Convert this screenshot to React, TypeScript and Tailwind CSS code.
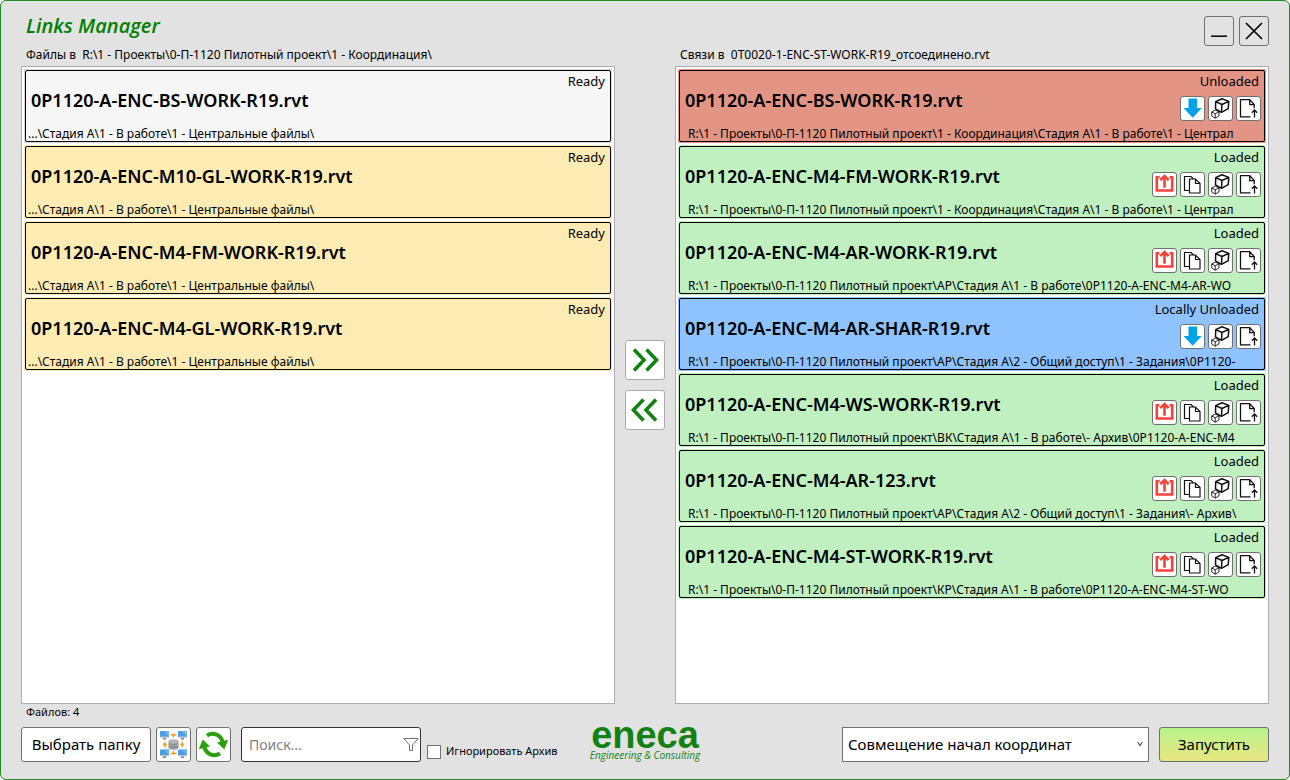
import React, { useState } from "react";
import clsx from "clsx";

type LinkStatus = "Loaded" | "Unloaded" | "Locally Unloaded";

const files = [
  "0P1120-A-ENC-BS-WORK-R19.rvt",
  "0P1120-A-ENC-M10-GL-WORK-R19.rvt",
  "0P1120-A-ENC-M4-FM-WORK-R19.rvt",
  "0P1120-A-ENC-M4-GL-WORK-R19.rvt",
];

const filePath = "...\\Стадия А\\1 - В работе\\1 - Центральные файлы\\";
const root = "R:\\1 - Проекты\\0-П-1120 Пилотный проект\\";

const links: { name: string; status: LinkStatus; path: string }[] = [
  {
    name: "0P1120-A-ENC-BS-WORK-R19.rvt",
    status: "Unloaded",
    path: root + "1 - Координация\\Стадия А\\1 - В работе\\1 - Централ",
  },
  {
    name: "0P1120-A-ENC-M4-FM-WORK-R19.rvt",
    status: "Loaded",
    path: root + "1 - Координация\\Стадия А\\1 - В работе\\1 - Централ",
  },
  {
    name: "0P1120-A-ENC-M4-AR-WORK-R19.rvt",
    status: "Loaded",
    path: root + "АР\\Стадия А\\1 - В работе\\0P1120-A-ENC-M4-AR-WO",
  },
  {
    name: "0P1120-A-ENC-M4-AR-SHAR-R19.rvt",
    status: "Locally Unloaded",
    path: root + "АР\\Стадия А\\2 - Общий доступ\\1 - Задания\\0P1120-",
  },
  {
    name: "0P1120-A-ENC-M4-WS-WORK-R19.rvt",
    status: "Loaded",
    path: root + "ВК\\Стадия А\\1 - В работе\\- Архив\\0P1120-A-ENC-M4",
  },
  {
    name: "0P1120-A-ENC-M4-AR-123.rvt",
    status: "Loaded",
    path: root + "АР\\Стадия А\\2 - Общий доступ\\1 - Задания\\- Архив\\",
  },
  {
    name: "0P1120-A-ENC-M4-ST-WORK-R19.rvt",
    status: "Loaded",
    path: root + "КР\\Стадия А\\1 - В работе\\0P1120-A-ENC-M4-ST-WO",
  },
];

const statusColor: Record<LinkStatus, string> = {
  Loaded: "bg-[#c0f0c0]",
  Unloaded: "bg-[#e29584]",
  "Locally Unloaded": "bg-[#8ec3ff]",
};

/* Icons */
const DownArrowIcon = () => (
  <svg viewBox="0 0 25 25" className="h-[25px] w-[25px] shrink-0">
    <path d="M8.500 2.500h8.500v9.500h4.800L12.700 21.800 3.500 12h5z" fill="#00a2e8" />
  </svg>
);

const UnloadIcon = () => (
  <svg viewBox="0 0 25 25" className="h-[25px] w-[25px] shrink-0" fill="none" stroke="#f44336" strokeWidth="2.6">
    <path d="M7.500 5.300H4.800v13.200h15.400V5.300H17.500" />
    <path d="M12.500 15.800V4.500M8.300 8.200l4.200-4.200 4.200 4.200" />
  </svg>
);

const CopyIcon = () => (
  <svg viewBox="0 0 25 25" className="h-[25px] w-[25px] shrink-0" fill="none" stroke="#111" strokeWidth="1.2">
    <path d="M9.500 18.500h-5v-14h6.500l2.500 2.500" />
    <path d="M9.500 7H15.500l4.500 4.500v9.500h-10.500zM15.500 7v4.500h4.500" />
  </svg>
);

const CubesIcon = () => (
  <svg viewBox="0 0 25 25" className="h-[25px] w-[25px] shrink-0" fill="none" stroke="#111" strokeLinejoin="round">
    <path d="M14 2.800l6.800 2.600-.6 7.200-6.700 3.700-6-3.500.2-7.200zM7.700 5.600l6.200 2.900 6.900-3.100M13.900 8.500l-.4 7.800" strokeWidth="1.5" />
    <path d="M7.300 14.200l3.900 1.700-.3 4-3.700 2.300-3.500-2.300V16zM3.700 16l3.500 1.700 4-1.800M7.200 17.700v4.500" strokeWidth="0.9" />
  </svg>
);

const PageUpIcon = () => (
  <svg viewBox="0 0 25 25" className="h-[25px] w-[25px] shrink-0" fill="none" stroke="#111" strokeWidth="1.3">
    <path d="M14.500 20.800h-10V3.600h9.200l4.500 5v3.600M13.700 3.600v5h4.500" />
    <path d="M18.500 21.500v-7.500M15.800 16.800l2.700-2.800 2.700 2.800" />
  </svg>
);

const Monitor = ({ x, y }: { x: number; y: number }) => (
  <g transform={`translate(${x} ${y})`}>
    <rect width="9" height="6" rx="0.5" fill="#4a9fe3" />
    <path d="M4 0h5v6z" fill="#6bb8f0" />
    <path d="M0 5.500h9v1.200H0z" fill="#b9c3cc" />
    <path d="M3.500 6.700h2l1 1.800h-4z" fill="#7d858c" />
  </g>
);

const NetworkIcon = () => (
  <svg viewBox="0 0 33 33" className="h-[33px] w-[33px]">
    <Monitor x={3} y={3} />
    <Monitor x={21} y={3} />
    <Monitor x={3} y={21.5} />
    <Monitor x={21} y={21.5} />
    <g stroke="#fb9a1c" strokeWidth="1.2" fill="#fb9a1c">
      <path d="M13.500 6.800h6M16.500 7v2.500M13.500 25.500h6M16.500 25.500V23" />
      <path d="M8 13.500v6M8 16.500h2M25 13.500v6M25 16.500h-2" />
      <circle cx="16.500" cy="6.800" r="0.800" />
      <circle cx="16.500" cy="25.500" r="0.800" />
      <circle cx="7.500" cy="16.500" r="0.800" />
      <circle cx="25.500" cy="16.500" r="0.800" />
    </g>
    <path d="M11.500 13.500v6c0 3 10 3 10 0v-6z" fill="#8d8d8d" />
    <ellipse cx="16.500" cy="13.500" rx="5" ry="2.200" fill="#b4b4b4" />
    <path d="M11.500 16.300c1 2 9 2 10 0M11.500 19c1 2 9 2 10 0" stroke="#b8b8b8" fill="none" strokeWidth="0.700" />
  </svg>
);

const RefreshIcon = () => (
  <svg viewBox="0 0 33 33" className="h-[33px] w-[33px]" fill="none">
    <path d="M10 7.500c6-3.500 13-1.500 15.500 6" stroke="#2c9f0c" strokeWidth="4" />
    <path d="M20 14.500l11.200-2.700-3.900 9.700z" fill="#2c9f0c" />
    <path d="M23 25.500c-6 3.500-13 1.500-15.500-6" stroke="#2c9f0c" strokeWidth="4" />
    <path d="M13 18.500L1.800 21.200l3.900-9.700z" fill="#2c9f0c" />
  </svg>
);

const IconButton: React.FC<{ label: string; children: React.ReactNode }> = ({ label, children }) => (
  <button
    aria-label={label}
    className="flex h-[25px] w-[25px] items-center justify-center overflow-hidden rounded-[3px] border border-[#707070] bg-white hover:bg-gray-100"
  >
    {children}
  </button>
);

const MoveButton: React.FC<{ label: string; d: string }> = ({ label, d }) => (
  <button aria-label={label} className="h-10 w-10 rounded-[3px] border border-[#ababab] bg-white">
    <svg viewBox="0 0 38 38" fill="none" stroke="#138213" strokeWidth="3.6">
      <path d={d} />
    </svg>
  </button>
);

interface CardProps {
  name: string;
  status: string;
  path: string;
  color: string;
  pathClass: string;
  onClick?: () => void;
  children?: React.ReactNode;
}

const Card: React.FC<CardProps> = ({ name, status, path, color, pathClass, onClick, children }) => (
  <li onClick={onClick} className={clsx("mb-0.5 p-px", color)}>
    <div className="rounded-xs border border-black">
      <div className="flex h-[54px] justify-between">
        <h2 className="pt-[15px] pl-[5px] text-lg leading-7 font-semibold whitespace-nowrap">{name}</h2>
        <div className="flex flex-col items-end gap-[5px] pr-[3px]">
          <span className="pr-0.5 text-[13px] leading-5">{status}</span>
          <div className="flex gap-[3px]">{children}</div>
        </div>
      </div>
      <p className={clsx("h-4 text-xs leading-[18px] whitespace-nowrap", pathClass)}>{path}</p>
    </div>
  </li>
);

const App: React.FC = () => {
  const [selected, setSelected] = useState(0);
  const [query, setQuery] = useState("");

  const shown = files.filter((f) => f.toLowerCase().includes(query.toLowerCase()));

  return (
    <div className="flex min-h-screen flex-col rounded-md border border-[#228b22] bg-[#e2e2e2] px-5 pt-[15px] pb-[17px] font-['Noto_Sans',sans-serif] text-black">
      {/* Header */}
      <header className="flex h-[31px] items-start justify-between pl-[5px]">
        <h1 className="font-['Open_Sans',sans-serif] text-xl leading-5 font-semibold text-[#008000] italic">Links Manager</h1>
        <div className="flex gap-[5px]">
          <button aria-label="Свернуть" className="h-[30px] w-[30px] rounded-[3px] border border-[#707070]">
            <svg viewBox="0 0 28 28" stroke="#000" strokeWidth="1.5">
              <path d="M6 19.200h16" />
            </svg>
          </button>
          <button aria-label="Закрыть" className="h-[30px] w-[30px] rounded-[3px] border border-[#707070]">
            <svg viewBox="0 0 28 28" stroke="#000" strokeWidth="1.7">
              <path d="M6 6l16 16M22 6L6 22" />
            </svg>
          </button>
        </div>
      </header>

      <main className="grid flex-1 grid-cols-[minmax(0,1fr)_60px_minmax(0,1fr)] grid-rows-[auto_1fr_auto]">
        <p className="mb-[3px] pl-[5px] text-xs leading-4 whitespace-pre">
          {"Файлы в  R:\\1 - Проекты\\0-П-1120 Пилотный проект\\1 - Координация\\"}
        </p>
        <p className="col-start-3 mb-[3px] pl-[5px] text-xs leading-4 whitespace-pre">
          {"Связи в  0Т0020-1-ENC-ST-WORK-R19_отсоединено.rvt"}
        </p>

        {/* Files */}
        <ul className="col-start-1 border border-[#abadb3] bg-white p-0.5">
          {shown.map((name) => {
            const active = files.indexOf(name) === selected;
            return (
              <Card
                key={name}
                name={name}
                status="Ready"
                path={filePath}
                color={active ? "bg-[#f6f6f6] outline -outline-offset-1 outline-[#dadada]" : "bg-[#fcecb4]"}
                pathClass="pl-0.5"
                onClick={() => setSelected(files.indexOf(name))}
              />
            );
          })}
        </ul>

        <div className="flex flex-col items-center justify-center gap-2.5">
          <MoveButton label="Добавить связь" d="M8 8.500L18 19 8 29.500M20.500 8.500L30.500 19 20.500 29.500" />
          <MoveButton label="Удалить связь" d="M17.500 8.500L7.500 19 17.500 29.500M30 8.500L20 19 30 29.500" />
        </div>

        {/* Links */}
        <ul className="border border-[#abadb3] bg-white p-0.5">
          {links.map((link) => (
            <Card key={link.name} {...link} color={statusColor[link.status]} pathClass="pl-2">
              {link.status === "Loaded" ? (
                <>
                  <IconButton label="Выгрузить"><UnloadIcon /></IconButton>
                  <IconButton label="Копировать"><CopyIcon /></IconButton>
                </>
              ) : (
                <IconButton label="Загрузить"><DownArrowIcon /></IconButton>
              )}
              <IconButton label="Координаты"><CubesIcon /></IconButton>
              <IconButton label="Обновить путь"><PageUpIcon /></IconButton>
            </Card>
          ))}
        </ul>

        <p className="mb-[7px] pl-[5px] text-[11px] leading-4">Файлов: {shown.length}</p>
      </main>

      {/* Footer */}
      <footer className="grid grid-cols-[1fr_auto_1fr]">
        <div className="flex">
          <button className="h-[35px] w-[130px] rounded-[3px] border border-[#707070] bg-white text-[15px]">
            Выбрать папку
          </button>
          <button aria-label="Сеть" className="ml-[5px] h-[35px] w-[35px] rounded-[3px] border border-[#707070] bg-white">
            <NetworkIcon />
          </button>
          <button aria-label="Обновить" className="ml-[5px] h-[35px] w-[35px] rounded-[3px] border border-[#707070] bg-white">
            <RefreshIcon />
          </button>
          <div className="relative ml-2.5">
            <input
              type="text"
              aria-label="Поиск"
              placeholder="Поиск..."
              value={query}
              onChange={(e) => setQuery(e.target.value)}
              className="h-[35px] w-[180px] rounded-[3px] border border-[#333] bg-white pr-6 pl-[7px] text-sm placeholder:text-[#808080]"
            />
            <svg viewBox="0 0 16 16" className="absolute top-2.5 right-0.5 h-4 w-4" fill="none" stroke="#707070">
              <path d="M.8 1.500h14.400L9.500 8v5.500h-3V8z" />
            </svg>
          </div>
          <label className="ml-1.5 flex items-center gap-[5px] pt-3.5 text-[11px] whitespace-nowrap">
            <input type="checkbox" className="h-3.5 w-3.5 appearance-none border border-[#707070] bg-white checked:bg-[#138213]" />
            Игнорировать Архив
          </label>
        </div>

        <div className="flex flex-col items-center text-[#138213]">
          <span className="font-['Liberation_Sans',sans-serif] text-[38px] leading-4 font-bold">eneca</span>
          <span className="mt-[5px] font-['Open_Sans',sans-serif] text-[10px] leading-[14px] italic">
            Engineering &amp; Consulting
          </span>
        </div>

        <div className="flex justify-end gap-2.5">
          <div className="relative">
            <select
              aria-label="Размещение"
              className="h-[35px] w-[307px] appearance-none border border-[#707070] bg-white px-[5px] text-[15px]"
            >
              <option>Совмещение начал координат</option>
              <option>Совмещение центров</option>
            </select>
            <svg viewBox="0 0 6 6" className="pointer-events-none absolute top-3.5 right-1.5 h-1.5 w-1.5" fill="none" stroke="#606060" strokeWidth="1.3">
              <path d="M.6 1l2.400 3.500L5.400 1" />
            </svg>
          </div>
          <button className="h-[35px] w-[110px] rounded-[3px] border border-[#707070] bg-linear-to-b from-[#b9f28d] to-[#e6e67f] text-[15px]">
            Запустить
          </button>
        </div>
      </footer>
    </div>
  );
};

export default App;
